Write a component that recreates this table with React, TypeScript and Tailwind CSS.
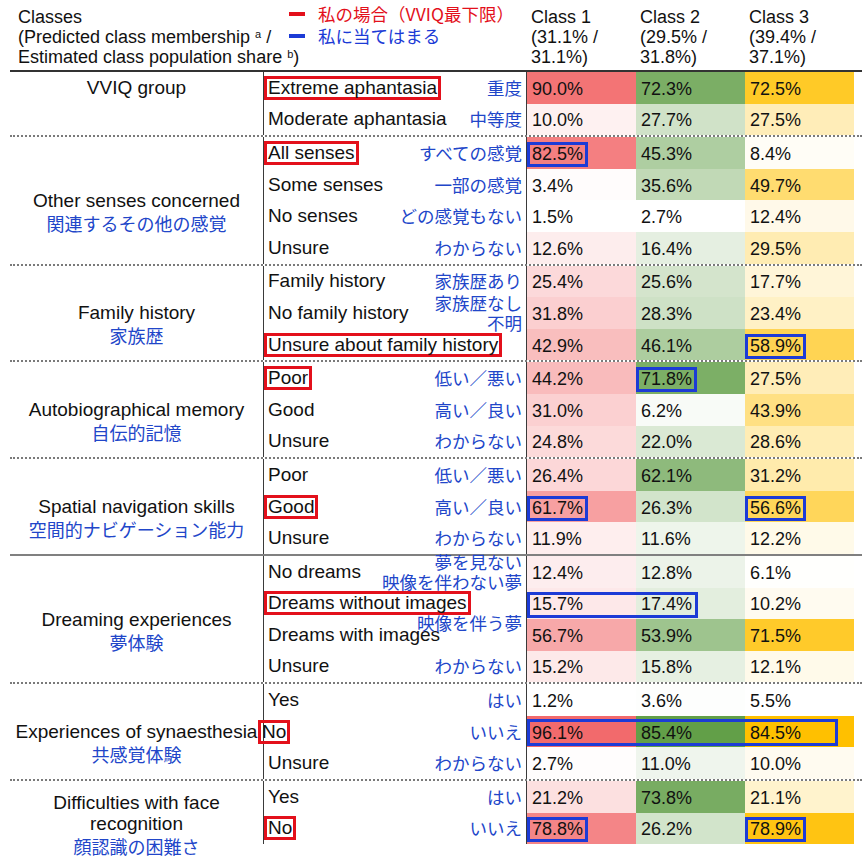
import React from "react";

type Row = {
  en: string;
  jp?: string | string[];
  jpUp?: boolean;
  red?: boolean;
  shift?: boolean;
  v: number[];
  blue?: number[];
  span?: number;
};

type Section = {
  title: string[];
  jp?: string;
  top?: boolean;
  solid?: boolean;
  last?: boolean;
  rows: Row[];
};

const sections: Section[] = [
  {
    title: ["VVIQ group"],
    top: true,
    rows: [
      { en: "Extreme aphantasia", jp: "重度", red: true, v: [90.0, 72.3, 72.5] },
      { en: "Moderate aphantasia", jp: "中等度", v: [10.0, 27.7, 27.5] },
    ],
  },
  {
    title: ["Other senses concerned"],
    jp: "関連するその他の感覚",
    rows: [
      { en: "All senses", jp: "すべての感覚", red: true, v: [82.5, 45.3, 8.4], blue: [0] },
      { en: "Some senses", jp: "一部の感覚", v: [3.4, 35.6, 49.7] },
      { en: "No senses", jp: "どの感覚もない", v: [1.5, 2.7, 12.4] },
      { en: "Unsure", jp: "わからない", v: [12.6, 16.4, 29.5] },
    ],
  },
  {
    title: ["Family history"],
    jp: "家族歴",
    rows: [
      { en: "Family history", jp: "家族歴あり", v: [25.4, 25.6, 17.7] },
      { en: "No family history", jp: ["家族歴なし", "不明"], v: [31.8, 28.3, 23.4] },
      { en: "Unsure about family history", red: true, v: [42.9, 46.1, 58.9], blue: [2] },
    ],
  },
  {
    title: ["Autobiographical memory"],
    jp: "自伝的記憶",
    rows: [
      { en: "Poor", jp: "低い／悪い", red: true, v: [44.2, 71.8, 27.5], blue: [1] },
      { en: "Good", jp: "高い／良い", v: [31.0, 6.2, 43.9] },
      { en: "Unsure", jp: "わからない", v: [24.8, 22.0, 28.6] },
    ],
  },
  {
    title: ["Spatial navigation skills"],
    jp: "空間的ナビゲーション能力",
    solid: true,
    rows: [
      { en: "Poor", jp: "低い／悪い", v: [26.4, 62.1, 31.2] },
      { en: "Good", jp: "高い／良い", red: true, v: [61.7, 26.3, 56.6], blue: [0, 2] },
      { en: "Unsure", jp: "わからない", v: [11.9, 11.6, 12.2] },
    ],
  },
  {
    title: ["Dreaming experiences"],
    jp: "夢体験",
    rows: [
      { en: "No dreams", jp: ["夢を見ない", "映像を伴わない夢"], v: [12.4, 12.8, 6.1] },
      { en: "Dreams without images", red: true, v: [15.7, 17.4, 10.2], span: 2 },
      { en: "Dreams with images", jp: "映像を伴う夢", jpUp: true, v: [56.7, 53.9, 71.5] },
      { en: "Unsure", jp: "わからない", v: [15.2, 15.8, 12.1] },
    ],
  },
  {
    title: ["Experiences of synaesthesia"],
    jp: "共感覚体験",
    rows: [
      { en: "Yes", jp: "はい", v: [1.2, 3.6, 5.5] },
      { en: "No", jp: "いいえ", red: true, shift: true, v: [96.1, 85.4, 84.5], span: 3 },
      { en: "Unsure", jp: "わからない", v: [2.7, 11.0, 10.0] },
    ],
  },
  {
    title: ["Difficulties with face", "recognition"],
    jp: "顔認識の困難さ",
    last: true,
    rows: [
      { en: "Yes", jp: "はい", v: [21.2, 73.8, 21.1] },
      { en: "No", jp: "いいえ", red: true, v: [78.8, 26.2, 78.9], blue: [0, 2] },
    ],
  },
];

const scaleMax = ["#f26a6c", "#629f48", "#ffc000"];

const allRows = sections.flatMap((s) => s.rows);
const ranges = [0, 1, 2].map((c) => {
  const vals = allRows.map((r) => r.v[c]);
  return [Math.min(...vals), Math.max(...vals)];
});

function tint(col: number, value: number) {
  const [lo, hi] = ranges[col];
  const t = (value - lo) / (hi - lo);
  const hex = scaleMax[col];
  const ch = [1, 3, 5].map((i) => parseInt(hex.slice(i, i + 2), 16));
  const [r, g, b] = ch.map((c) => Math.round(255 + (c - 255) * t));
  return `rgb(${r}, ${g}, ${b})`;
}

const classes = [
  { name: "Class 1", a: "(31.1% /", b: "31.1%)" },
  { name: "Class 2", a: "(29.5% /", b: "31.8%)" },
  { name: "Class 3", a: "(39.4% /", b: "37.1%)" },
];

const jpFont = "font-['Noto_Sans_CJK_JP',sans-serif]";

function DataRow({ row }: { row: Row }) {
  return (
    <div className="flex h-[31.6px]">
      {/* label */}
      <div className="w-[264px] h-full flex items-center border-l border-r border-[#3a3a3a] pr-[4px] text-[19px]">
        <span
          className={`inline-block min-w-0 whitespace-nowrap border-[3px] px-[1px] leading-[18px] ${
            row.red ? "border-[#e3101b]" : "border-transparent"
          } ${row.shift ? "-ml-[6px] relative" : ""}`}
        >
          {row.en}
        </span>
        {row.jp && (
          <div
            className={`ml-auto shrink-0 flex flex-col items-end text-[#2146c9] text-[17.5px] leading-[20px] whitespace-nowrap ${jpFont} ${
              row.jpUp ? "-translate-y-[12px]" : ""
            }`}
          >
            {(Array.isArray(row.jp) ? row.jp : [row.jp]).map((t) => (
              <span key={t}>{t}</span>
            ))}
          </div>
        )}
      </div>
      {/* values */}
      <div className="relative flex h-full">
        {row.v.map((val, i) => (
          <div
            key={i}
            className="w-[109px] h-full flex items-center pt-[3px]"
            style={{ background: tint(i, val) }}
          >
            <span
              className={`inline-block border-[3px] px-[2px] leading-[19px] ${
                row.blue?.includes(i) ? "border-[#1c3bd6]" : "border-transparent"
              }`}
            >
              {val.toFixed(1)}%
            </span>
          </div>
        ))}
        {row.span === 2 && (
          <div className="absolute left-0 top-[4px] w-[171px] h-[26px] border-[3px] border-[#1c3bd6]" />
        )}
        {row.span === 3 && (
          <div className="absolute left-0 top-[3px] w-[311px] h-[27px] border-[3px] border-[#1c3bd6]" />
        )}
      </div>
    </div>
  );
}

export default function App() {
  return (
    <div className="w-[868px] h-[858px] bg-white text-[#111] text-[18px] font-['Liberation_Sans',Arial,sans-serif] overflow-hidden">
      {/* Header */}
      <div className="relative flex h-[70px] pt-[7px] leading-[20px]">
        <div className="w-[527px] pl-[18px]">
          <p>Classes</p>
          <p>
            (Predicted class membership <sup className="text-[11px]">a</sup> /
          </p>
          <p>
            Estimated class population share <sup className="text-[11px]">b</sup>)
          </p>
        </div>
        {classes.map((c) => (
          <div key={c.name} className="w-[109px] pl-[4px]">
            <p>{c.name}</p>
            <p>{c.a}</p>
            <p>{c.b}</p>
          </div>
        ))}
        {/* legend */}
        <div className={`absolute left-[289px] top-[3px] text-[17.5px] leading-[22px] ${jpFont}`}>
          <div className="flex items-center">
            <div className="w-[16px] h-[4px] bg-[#e3101b] mr-[13px]" />
            <span className="text-[#e3101b]">私の場合（VVIQ最下限）</span>
          </div>
          <div className="flex items-center">
            <div className="w-[16px] h-[4px] bg-[#1c3bd6] mr-[13px]" />
            <span className="text-[#1c3bd6]">私に当てはまる</span>
          </div>
        </div>
      </div>
      <div className="ml-[10px] w-[852px] h-[2px] bg-[#333]" />

      {/* Body */}
      <div className="ml-[10px] w-[852px]">
        {sections.map((s, si) => (
          <div
            key={si}
            className={`flex ${
              s.last
                ? ""
                : s.solid
                ? "border-b-2 border-solid border-[#808080]"
                : "border-b-2 border-dotted border-[#7a7a7a]"
            }`}
          >
            {s.top ? (
              <div className="w-[253px] h-[31.6px] flex items-center justify-center text-[19px]">{s.title[0]}</div>
            ) : (
              <div className="w-[253px] flex flex-col items-center justify-center text-center text-[19px]">
                {s.title.map((t) => (
                  <span key={t} className="leading-[21px] whitespace-nowrap">
                    {t}
                  </span>
                ))}
                <div className="h-0">
                  <span className={`block leading-[25px] text-[18px] text-[#2146c9] whitespace-nowrap ${jpFont}`}>
                    {s.jp}
                  </span>
                </div>
              </div>
            )}
            <div className="flex flex-col">
              {s.rows.map((r, ri) => (
                <DataRow key={ri} row={r} />
              ))}
            </div>
          </div>
        ))}
      </div>
    </div>
  );
}
